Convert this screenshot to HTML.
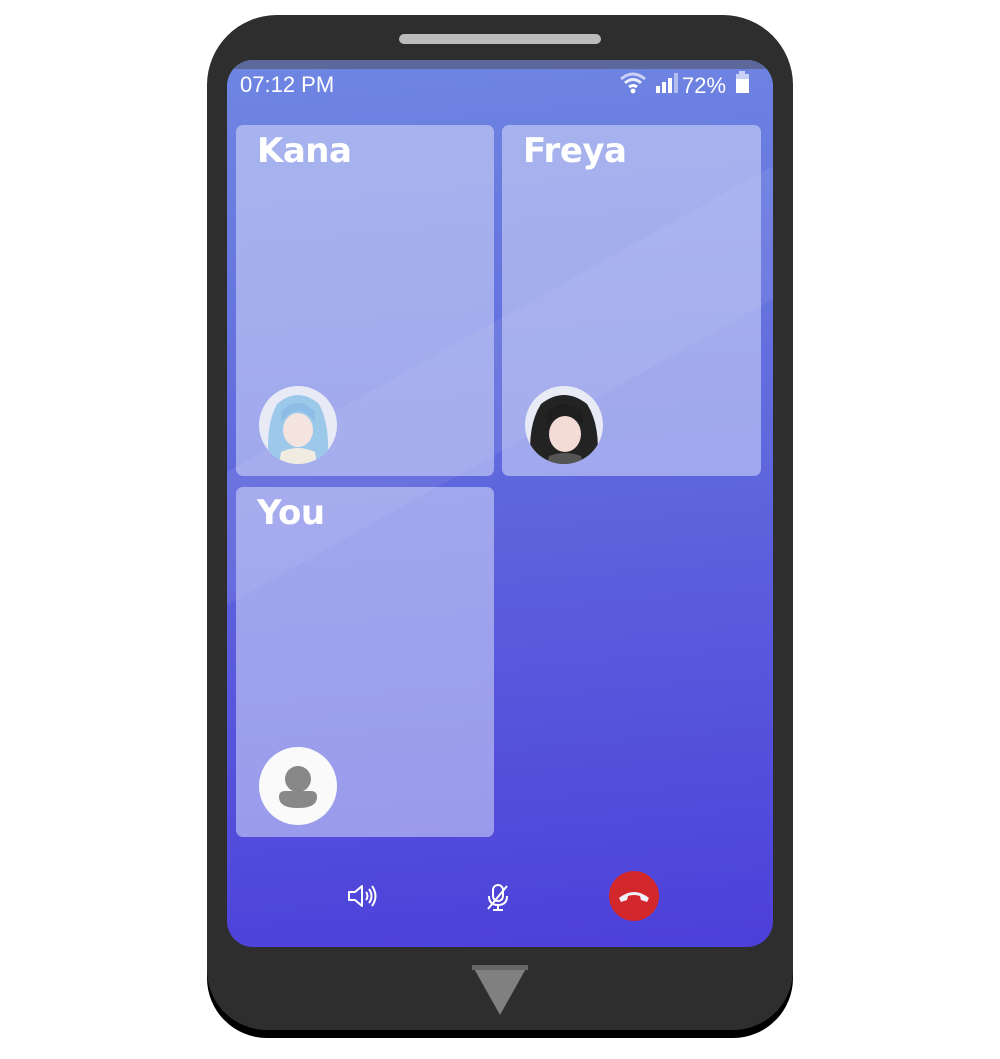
<!DOCTYPE html>
<html><head><meta charset="utf-8"><style>
*{margin:0;padding:0;box-sizing:border-box}
body{width:1000px;height:1059px;background:#fff;position:relative;overflow:hidden;font-family:"DejaVu Sans","Liberation Sans",sans-serif}
.shadow{position:absolute;left:207px;top:22px;width:586px;height:1016px;border-radius:70px 70px 60px 60px;background:#000}
.phone{position:absolute;left:207px;top:15px;width:586px;height:1015px;border-radius:70px 70px 60px 60px;background:#2e2e2e}
.speaker{position:absolute;left:399px;top:34px;width:202px;height:10px;border-radius:5px;background:#bcbcbc}
.screen{position:absolute;left:227px;top:60px;width:546px;height:887px;border-radius:26px;overflow:hidden;background:linear-gradient(175deg,#6f86e2 0%,#6069dd 45%,#4c3fda 100%)}
.topband{position:absolute;left:0;top:0;width:100%;height:9px;background:#5c6899}
.time{position:absolute;left:13px;top:12px;color:#fff;font-size:22px;font-family:"Liberation Sans",sans-serif}
.card{position:absolute;background:rgba(215,220,250,0.55);border-radius:7px}
.name{position:absolute;left:21px;top:6px;color:#fff;font-weight:bold;font-size:34px;letter-spacing:-0.5px}
.av{position:absolute;width:78px;height:78px;border-radius:50%;overflow:hidden}
</style></head><body>
<div class="shadow"></div>
<div class="phone"></div>
<div class="speaker"></div>
<div class="screen">
<div class="topband"></div>
<div class="time">07:12 PM</div>
<svg style="position:absolute;left:392px;top:10px" width="140" height="28" viewBox="0 0 140 28">
<path d="M2 9 Q14 -1 26 9" stroke="#c9d2f5" stroke-width="3" fill="none"/>
<path d="M6 13 Q14 6 22 13" stroke="#e8ecfb" stroke-width="3" fill="none"/>
<path d="M10 17 Q14 14 18 17" stroke="#fff" stroke-width="3" fill="none"/>
<circle cx="14" cy="21" r="2.4" fill="#fff"/>
<rect x="37" y="16" width="4" height="7" fill="#fff"/><rect x="43" y="12" width="4" height="11" fill="#fff"/><rect x="49" y="8" width="4" height="15" fill="#fff"/><rect x="55" y="3" width="4" height="20" fill="#b4bff0"/>
<text x="63" y="23" fill="#fff" font-size="22" font-family="Liberation Sans">72%</text>
<rect x="120" y="1" width="6" height="3" fill="#c9d0f5"/><rect x="117" y="4" width="13" height="5" fill="#c9d0f5"/><rect x="117" y="9" width="13" height="14" fill="#fff"/>
</svg>
<svg style="position:absolute;left:0;top:0" width="546" height="887"><polygon points="0,412 546,106 546,239 0,545" fill="rgba(255,255,255,0.07)"/></svg>
<div class="card" style="left:9px;top:65px;width:258px;height:351px"><div class="name">Kana</div>
<div class="av" style="left:23px;top:261px;background:#e8eaf6">
<svg width="78" height="78"><path d="M10 78 Q6 40 18 18 Q39 0 60 18 Q72 40 68 78Z" fill="#9cc8ea"/><ellipse cx="39" cy="44" rx="15" ry="17" fill="#f4e4df"/><path d="M22 36 Q39 14 56 36 L56 26 Q39 8 22 26Z" fill="#8dbde6"/><path d="M22 66 Q39 58 56 66 L58 78 H20Z" fill="#f1ece2"/></svg></div></div>
<div class="card" style="left:275px;top:65px;width:259px;height:351px"><div class="name">Freya</div>
<div class="av" style="left:23px;top:261px;background:#e8eaf6">
<svg width="78" height="78"><path d="M6 78 Q2 40 16 18 Q39 0 62 18 Q76 40 72 78Z" fill="#232323"/><ellipse cx="40" cy="48" rx="16" ry="18" fill="#f4dcd6"/><path d="M22 40 Q40 18 58 40 L58 26 Q40 10 22 26Z" fill="#1e1e1e"/><path d="M24 70 Q40 64 56 70 L58 78 H22Z" fill="#555"/></svg></div></div>
<div class="card" style="left:9px;top:427px;width:258px;height:350px"><div class="name">You</div>
<div class="av" style="left:23px;top:260px;background:#fafafa"><svg width="78" height="78"><circle cx="39" cy="32" r="13" fill="#888"/><path d="M20 50 Q20 44 26 44 H52 Q58 44 58 50 Q58 61 39 61 Q20 61 20 50Z" fill="#888"/></svg></div></div>
<svg style="position:absolute;left:120px;top:822px" width="32" height="28" viewBox="0 0 32 28"><path d="M2 10 H8 L15 4 V24 L8 18 H2Z" stroke="#fff" stroke-width="2" fill="none" stroke-linejoin="round"/><path d="M19 10 Q22 14 19 18 M22 7 Q27 14 22 21 M25 4 Q32 14 25 24" stroke="#fff" stroke-width="2" fill="none"/></svg>
<svg style="position:absolute;left:258px;top:823px" width="26" height="30" viewBox="0 0 26 30"><rect x="8" y="2" width="10" height="16" rx="5" stroke="#fff" stroke-width="2" fill="none"/><path d="M4 13 Q4 22 13 22 Q22 22 22 13 M13 22 V27 M8 27 H18 M3 26 L22 3" stroke="#fff" stroke-width="2" fill="none"/></svg>
<div style="position:absolute;left:382px;top:811px;width:50px;height:50px;border-radius:50%;background:#d3282b"></div>
<svg style="position:absolute;left:389px;top:826px" width="36" height="20" viewBox="0 0 36 20"><path d="M3 12 Q18 0 33 12 L31 16 L25 14 L24 10 Q18 8 12 10 L11 14 L5 16Z" fill="#eef0fa"/></svg>
</div>
<svg style="position:absolute;left:472px;top:965px" width="56" height="50"><polygon points="0,0 56,0 28,50" fill="#808080"/><rect x="0" y="0" width="56" height="5" fill="#666"/></svg>
</body></html>
